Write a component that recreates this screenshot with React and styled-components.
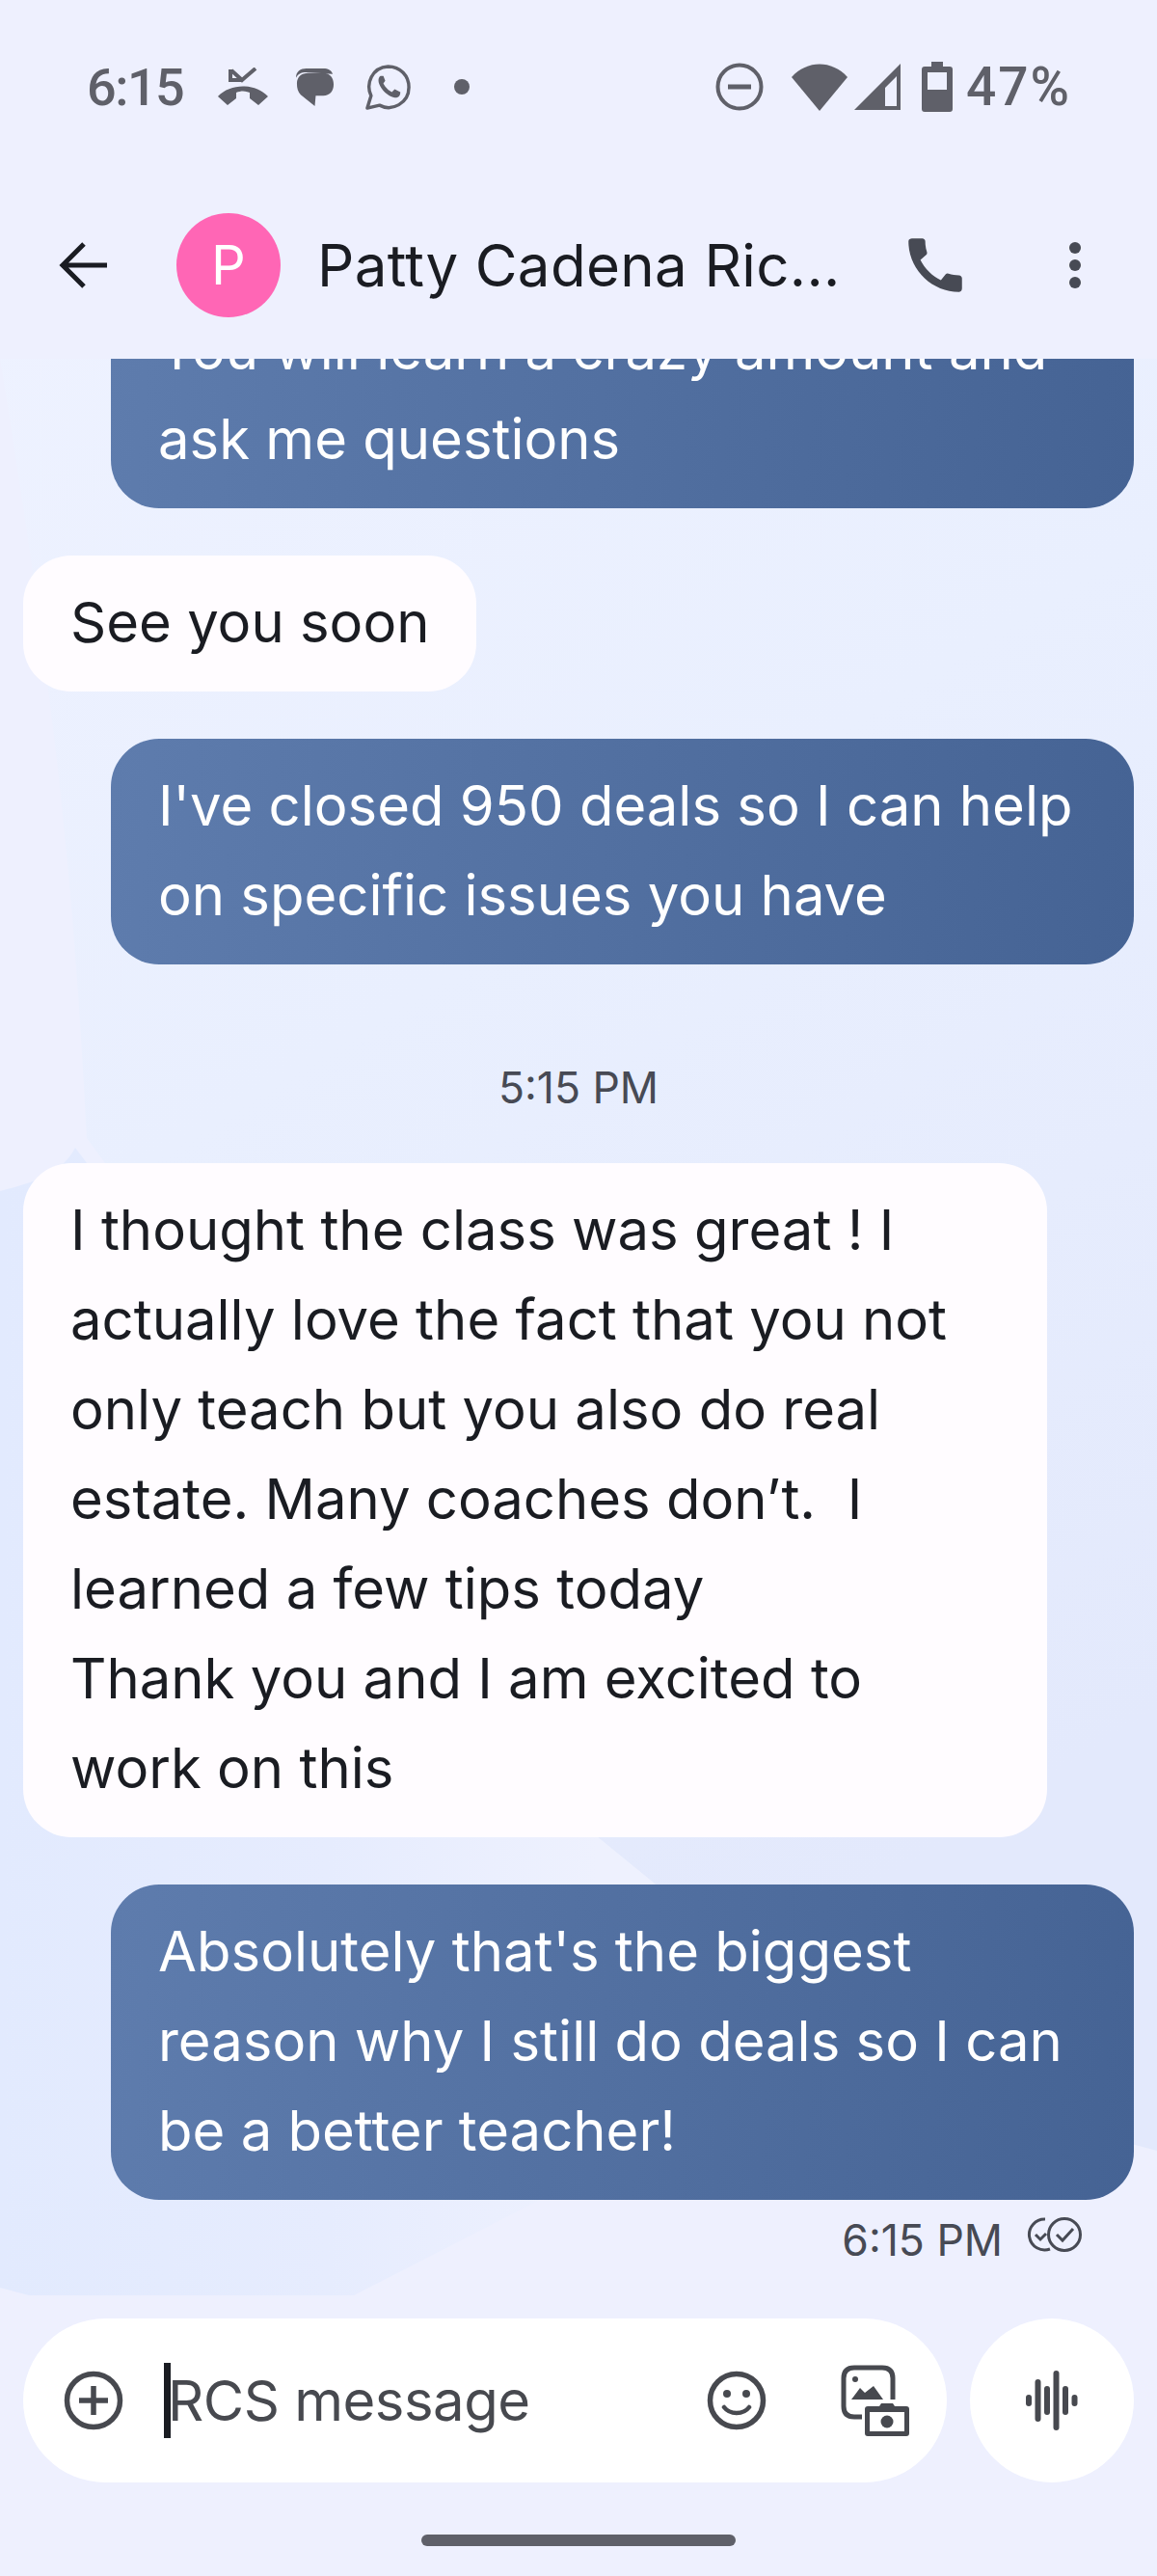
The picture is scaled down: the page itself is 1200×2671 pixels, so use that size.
import React from "react";
import styled, { createGlobalStyle } from "styled-components";

const Global = createGlobalStyle`
  html, body { margin: 0; padding: 0; background: #eef0fe; }
  * { box-sizing: border-box; }
`;

const Page = styled.div`
  position: relative;
  width: 1200px;
  height: 2671px;
  overflow: hidden;
  display: flex;
  flex-direction: column;
  font-family: Inter, "Noto Sans", sans-serif;
  background: #eef0fe;
`;

const Backdrop = styled.svg`
  position: absolute;
  inset: 0;
  width: 1200px;
  height: 2671px;
`;

const IconSvg = styled.svg`
  flex: none;
  display: block;
  margin-right: ${(p) => p.$mr ?? 0}px;
`;

const StatusBar = styled.div`
  position: relative;
  height: 180px;
  padding: 0 89px 0 90px;
  display: flex;
  align-items: center;
  color: #5f6069;
  flex: none;
`;

const Clock = styled.span`
  font-size: 54px;
  font-weight: 500;
  font-family: Roboto, sans-serif;
  letter-spacing: -1.5px;
  width: 98px;
  white-space: nowrap;
  margin-right: 37px;
`;

const NotifyIcons = styled.div`
  display: flex;
  align-items: center;
  flex: 1;
`;

const SystemIcons = styled.div`
  display: flex;
  align-items: center;
`;

const Battery = styled.span`
  font-size: 55px;
  font-weight: 500;
  font-family: Roboto, sans-serif;
  letter-spacing: 2px;
`;

const Header = styled.header`
  position: relative;
  flex: none;
  height: 192px;
  display: flex;
  align-items: center;
  padding: 0 0 3px 61px;
`;

const Avatar = styled.div`
  width: 108px;
  height: 108px;
  border-radius: 50%;
  background: #ff66b5;
  color: #fff;
  font-size: 56px;
  display: flex;
  align-items: center;
  justify-content: center;
  margin: 0 38px 0 72px;
`;

const Title = styled.div`
  width: 604px;
  font-size: 60px;
  letter-spacing: 0.35px;
  color: #1a1c22;
  white-space: nowrap;
`;

const HeaderActions = styled.div`
  display: flex;
  align-items: center;
  gap: 100px;
`;

const Chat = styled.main`
  position: relative;
  flex: 1;
  min-height: 0;
  overflow: hidden;
  display: flex;
  flex-direction: column;
  justify-content: flex-end;
  padding: 0 24px;
`;

const Bubble = styled.div`
  flex: none;
  font-size: 58px;
  line-height: 93px;
  padding: 23px 49px 25px;
  border-radius: 50px;
  white-space: pre-wrap;
  margin-top: ${(p) => p.$gap ?? 49}px;
  ${(p) => (p.$width ? `width: ${p.$width}px;` : "")}
  ${(p) =>
    p.$out
      ? `
    align-self: flex-end;
    width: 1061px;
    color: #fff;
    background: linear-gradient(95deg, #5e7cad, #456394);
  `
      : `
    align-self: flex-start;
    color: #1a1c22;
    background: #fffcff;
  `}
`;

const Stamp = styled.div`
  flex: none;
  text-align: center;
  font-size: 44.5px;
  line-height: 60px;
  color: #474a54;
  margin-top: 98px;
`;

const Sent = styled.div`
  flex: none;
  height: 84px;
  display: flex;
  justify-content: flex-end;
  align-items: center;
  gap: 24px;
  font-size: 44.5px;
  color: #474a54;
  padding-right: 54px;
`;

const CheckMark = styled.span`
  display: flex;
  margin-bottom: 13px;
`;

const Composer = styled.div`
  position: relative;
  flex: none;
  display: flex;
  gap: 24px;
  padding: 39px 24px 0;
`;

const InputPill = styled.div`
  width: 958px;
  height: 170px;
  border-radius: 85px;
  background: #fff;
  display: flex;
  align-items: center;
  padding: 0 38px 0 42px;
`;

const Caret = styled.span`
  width: 7px;
  height: 78px;
  background: #1a1c22;
  margin: 0 -3px 0 42px;
  flex: none;
`;

const Placeholder = styled.span`
  flex: 1;
  font-size: 58px;
  letter-spacing: -0.5px;
  color: #47494f;
`;

const Mic = styled.div`
  width: 170px;
  height: 170px;
  border-radius: 50%;
  background: #fff;
  display: flex;
  align-items: center;
  justify-content: center;
`;

const HomeWrap = styled.div`
  position: relative;
  flex: none;
  height: 97px;
  padding-top: 54px;
  display: flex;
  justify-content: center;
`;

const HomeBar = styled.div`
  width: 326px;
  height: 12px;
  border-radius: 6px;
  background: #5f6069;
`;

const Icon = ({ size, w, h, vb, children, mr, color = "#5f6069" }) => (
  <IconSvg width={w || size} height={h || size} viewBox={vb} fill={color} $mr={mr}>
    {children}
  </IconSvg>
);

export default function App() {
  return (
    <Page>
      <Global />
      <Backdrop viewBox="0 0 1200 2671">
        <defs>
          <linearGradient id="wash" gradientUnits="userSpaceOnUse" x1="0" y1="300" x2="1000" y2="1900">
            <stop offset="0" stopColor="#eef2ff" />
            <stop offset="0.45" stopColor="#e9effe" />
            <stop offset="1" stopColor="#e3e9fc" />
          </linearGradient>
          <linearGradient id="blob" gradientUnits="userSpaceOnUse" x1="0" y1="0" x2="620" y2="0">
            <stop offset="0" stopColor="#e2eafe" />
            <stop offset="0.55" stopColor="#e6ecfe" />
            <stop offset="1" stopColor="#eef1fe" />
          </linearGradient>
        </defs>
        <path d="M0 372 L1200 372 L1200 2230 L820 2130 L680 1954 L620 1905 L90 1180 C80 1000 70 800 0 372Z" fill="url(#wash)" />
        <path d="M0 1235 C40 1225 65 1215 78 1190 L620 1905 L680 1954 L640 2180 L562 2280 L367 2380 L30 2380 L0 2372Z" fill="url(#blob)" />
      </Backdrop>
      <StatusBar>
        <Clock>6:15</Clock>
        <NotifyIcons>
          <Icon w={54} h={40} vb="0 0 54 40" mr={27}>
            <path d="M1 30 C14 16 40 16 53 30 L43 39 L34 32 L34 26 C29 24 25 24 20 26 L20 32 L11 39Z" />
            <path d="M14 2 L14 13 L26 13 M15 3 L26 13 L40 1" fill="none" stroke="#5f6069" strokeWidth="4" />
          </Icon>
          <Icon w={41} h={41} vb="0 0 42 42" mr={31}>
            <path d="M1 11 C1 4 6 1 12 1 L30 1 C35 1 39 3 40 7 L12 5 C6 5 3 7 1 11Z" />
            <path d="M2 17 C2 10 7 6 14 6 L30 6 C37 6 41 11 41 18 C41 25 37 30 30 30 L22 30 L21 41 L6 29 C3 26 2 22 2 17Z" />
          </Icon>
          <Icon w={49} h={49} vb="0 0 50 50" mr={43}>
            <path d="M3 47 L7 34 C1 21 8 4 25 3 C38 3 47 13 47 25 C47 42 29 51 16 44Z" fill="none" stroke="#5f6069" strokeWidth="3.5" strokeLinejoin="round" />
            <path d="M17 13 C14 15 14 20 18 26 C23 33 29 36 34 36 C37 35 38 33 38 30 L32 27 L29 30 C26 29 22 25 20 21 L22 18 L20 13Z" />
          </Icon>
          <Icon size={18} vb="0 0 18 18">
            <circle cx="9" cy="9" r="8" />
          </Icon>
        </NotifyIcons>
        <SystemIcons>
          <Icon size={50} vb="0 0 50 50" mr={28}>
            <circle cx="25" cy="25" r="22.5" fill="none" stroke="#5f6069" strokeWidth="4" />
            <rect x="13" y="22.5" width="24" height="5" />
          </Icon>
          <Icon w={60} h={50} vb="0 0 60 50" mr={5}>
            <path d="M30 50 L1 15 C17 -3 43 -3 59 15Z" />
          </Icon>
          <Icon w={50} h={50} vb="0 0 50 50" mr={21}>
            <path d="M1 49 L49 1 L49 49Z M33 45 L45 45 L45 14 L33 26Z" fillRule="evenodd" />
          </Icon>
          <Icon w={32} h={52} vb="0 0 32 52" mr={14}>
            <path d="M10 0 L22 0 L22 5 L29 5 Q32 5 32 8 L32 49 Q32 52 29 52 L3 52 Q0 52 0 49 L0 8 Q0 5 3 5 L10 5Z M6 11 L6 29 L26 29 L26 11Z" fillRule="evenodd" />
          </Icon>
          <Battery>47%</Battery>
        </SystemIcons>
      </StatusBar>
      <Header>
        <Icon w={50} h={50} vb="0 0 50 50" color="#1a1c22">
          <path d="M26 3 L4 25 L26 47 M4 25 L50 25" fill="none" stroke="#1a1c22" strokeWidth="5" />
        </Icon>
        <Avatar>P</Avatar>
        <Title>Patty Cadena Ric...</Title>
        <HeaderActions>
          <Icon w={74} h={74} vb="0 0 24 24" color="#474a54">
            <path d="M20.01 15.38c-1.23 0-2.42-.2-3.53-.56a.977.977 0 0 0-1.01.24l-1.57 1.97c-2.83-1.35-5.48-3.9-6.89-6.83l1.95-1.66c.27-.28.35-.67.24-1.02-.37-1.11-.56-2.3-.56-3.53 0-.54-.45-.99-.99-.99H4.19C3.65 3 3 3.24 3 3.99 3 13.28 10.73 21 20.01 21c.71 0 .99-.63.99-1.18v-3.45c0-.54-.45-.99-.99-.99z" />
          </Icon>
          <Icon w={16} h={50} vb="0 0 16 50" color="#474a54">
            <circle cx="8" cy="7" r="6" />
            <circle cx="8" cy="25" r="6" />
            <circle cx="8" cy="43" r="6" />
          </Icon>
        </HeaderActions>
      </Header>
      <Chat>
        <Bubble $out>{"You will learn a crazy amount and\nask me questions"}</Bubble>
        <Bubble>See you soon</Bubble>
        <Bubble $out>{"I've closed 950 deals so I can help\non specific issues you have"}</Bubble>
        <Stamp>5:15 PM</Stamp>
        <Bubble $gap={48} $width={1062}>
          {"I thought the class was great ! I\nactually love the fact that you not\nonly teach but you also do real\nestate. Many coaches don’t.  I\nlearned a few tips today\nThank you and I am excited to\nwork on this"}
        </Bubble>
        <Bubble $out>{"Absolutely that's the biggest\nreason why I still do deals so I can\nbe a better teacher!"}</Bubble>
        <Sent>
          6:15 PM
          <CheckMark>
            <Icon w={58} h={38} vb="0 0 58 38" color="#474a54">
              <path d="M20 3 A16 16 0 1 0 25 34" fill="none" stroke="#474a54" strokeWidth="3" />
              <circle cx="40" cy="19" r="16.5" fill="none" stroke="#474a54" strokeWidth="3" />
              <path d="M32 19 L38 25 L49 13 M10 19 L15 24 L21 18" fill="none" stroke="#474a54" strokeWidth="3" />
            </Icon>
          </CheckMark>
        </Sent>
      </Chat>
      <Composer>
        <InputPill>
          <Icon size={62} vb="0 0 62 62" color="#47494f">
            <circle cx="31" cy="31" r="27.5" fill="none" stroke="#47494f" strokeWidth="5.5" />
            <path d="M31 16 V46 M16 31 H46" stroke="#47494f" strokeWidth="5.5" />
          </Icon>
          <Caret />
          <Placeholder>RCS message</Placeholder>
          <Icon size={62} vb="0 0 62 62" color="#47494f" mr={77}>
            <circle cx="31" cy="31" r="27.5" fill="none" stroke="#47494f" strokeWidth="5.5" />
            <circle cx="21" cy="24" r="4" />
            <circle cx="41" cy="24" r="4" />
            <path d="M18 38 C24 46 38 46 44 38" fill="none" stroke="#47494f" strokeWidth="4.5" strokeLinecap="round" />
          </Icon>
          <Icon w={72} h={75} vb="0 0 72 75" color="#47494f">
            <path d="M22 54 L14 54 Q3 54 3 43 L3 14 Q3 3 14 3 L43 3 Q54 3 54 14 L54 36" fill="none" stroke="#47494f" strokeWidth="5" />
            <circle cx="15" cy="15" r="3" />
            <path d="M11 36 L20 24 L25 29 L34 22 L44 36Z" />
            <path d="M25 46 Q25 43 28 43 L40 43 L42 40 L54 40 L56 43 L68 43 Q71 43 71 46 L71 71 Q71 74 68 74 L28 74 Q25 74 25 71Z M30 49 L30 69 L66 69 L66 49Z" fillRule="evenodd" />
            <circle cx="48" cy="59" r="6.5" />
          </Icon>
        </InputPill>
        <Mic>
          <Icon w={54} h={62} vb="0 0 54 62" color="#47494f">
            <rect x="0" y="25" width="6" height="12" rx="3" />
            <rect x="9.5" y="9" width="6" height="44" rx="3" />
            <rect x="19" y="16" width="6" height="30" rx="3" />
            <rect x="28.5" y="0" width="6" height="62" rx="3" />
            <rect x="38" y="16" width="6" height="30" rx="3" />
            <rect x="47.5" y="25" width="6" height="12" rx="3" />
          </Icon>
        </Mic>
      </Composer>
      <HomeWrap>
        <HomeBar />
      </HomeWrap>
    </Page>
  );
}
